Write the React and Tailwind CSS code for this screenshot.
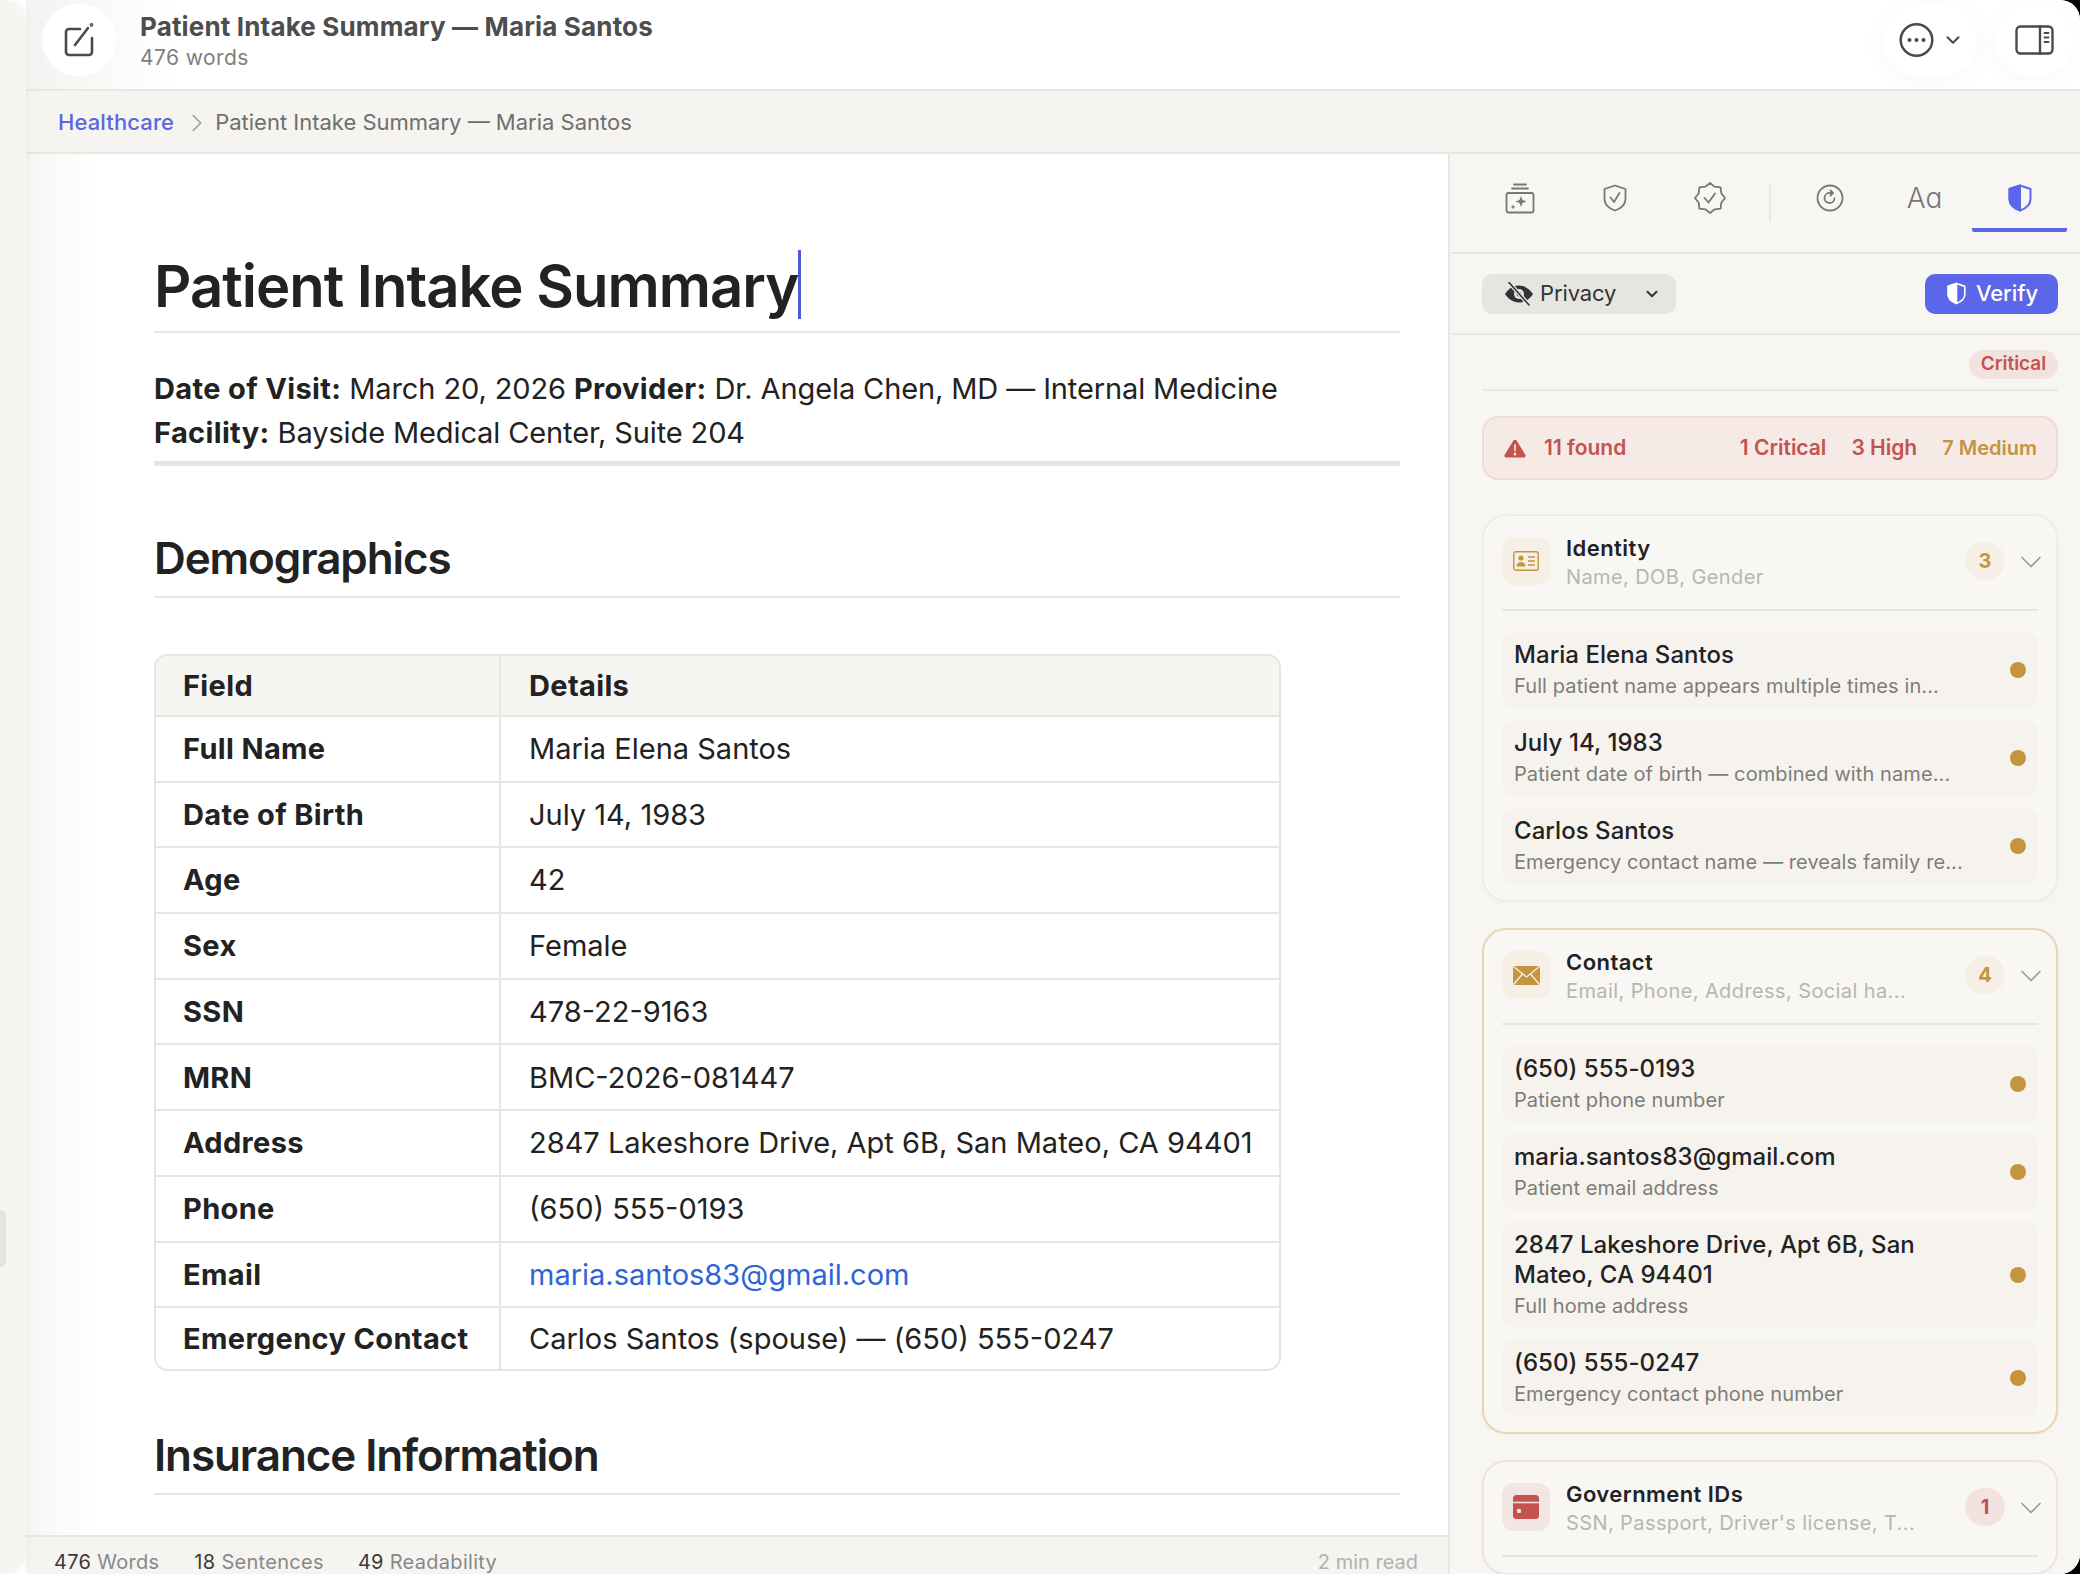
import React from "react";
import { ChevronDown, ChevronRight } from "lucide-react";

const rows = [
  ["Full Name", "Maria Elena Santos"],
  ["Date of Birth", "July 14, 1983"],
  ["Age", "42"],
  ["Sex", "Female"],
  ["SSN", "478-22-9163"],
  ["MRN", "BMC-2026-081447"],
  ["Address", "2847 Lakeshore Drive, Apt 6B, San Mateo, CA 94401"],
  ["Phone", "(650) 555-0193"],
  ["Email", "maria.santos83@gmail.com"],
  ["Emergency Contact", "Carlos Santos (spouse) — (650) 555-0247"],
];

const identityItems = [
  ["Maria Elena Santos", "Full patient name appears multiple times in..."],
  ["July 14, 1983", "Patient date of birth — combined with name..."],
  ["Carlos Santos", "Emergency contact name — reveals family re..."],
];

const contactItems = [
  ["(650) 555-0193", "Patient phone number"],
  ["maria.santos83@gmail.com", "Patient email address"],
  ["2847 Lakeshore Drive, Apt 6B, San Mateo, CA 94401", "Full home address"],
  ["(650) 555-0247", "Emergency contact phone number"],
];

// wavy outline for the verified badge
const badgePoints = Array.from({ length: 16 }, (_, i) => {
  const a = (i * Math.PI) / 8 - Math.PI / 2;
  const r = i % 2 === 0 ? 15 : 12.2;
  return `${(16 + r * Math.cos(a)).toFixed(1)},${(16 + r * Math.sin(a)).toFixed(1)}`;
}).join(" ");

const PenSquare = () => (
  <svg width="36" height="36" viewBox="0 0 36 36" fill="none" stroke="#4a4a4a" strokeWidth="2.6" strokeLinecap="round" strokeLinejoin="round">
    <path d="M19 7H8a3 3 0 0 0-3 3v20a3 3 0 0 0 3 3h20a3 3 0 0 0 3-3V16" />
    <path d="M14 23 27 6" />
    <circle cx="30.5" cy="2.8" r="0.6" fill="#4a4a4a" />
  </svg>
);

const DotsCircle = () => (
  <svg width="35" height="36" viewBox="0 0 35 36" fill="none">
    <circle cx="17.5" cy="18" r="15.8" stroke="#4a4a4a" strokeWidth="2.5" />
    <circle cx="10.5" cy="18" r="2" fill="#4a4a4a" />
    <circle cx="17.5" cy="18" r="2" fill="#4a4a4a" />
    <circle cx="24.5" cy="18" r="2" fill="#4a4a4a" />
  </svg>
);

const PanelIcon = () => (
  <svg width="39" height="30" viewBox="0 0 39 30" fill="none" stroke="#4a4a4a" strokeWidth="2.4" strokeLinecap="round">
    <rect x="1.5" y="1.5" width="36" height="27" rx="4" />
    <path d="M25 1.5v27" />
    <path d="M29.5 8h4M29.5 12.5h4M29.5 17h4" strokeWidth="1.8" />
  </svg>
);

const JarIcon = () => (
  <svg width="30" height="31" viewBox="0 0 30 31" fill="none" stroke="#777" strokeWidth="1.8" strokeLinecap="round" strokeLinejoin="round">
    <path d="M9 1.5h12M7 5.5h16" />
    <rect x="1.5" y="10" width="27" height="19.5" rx="2" />
    <path d="M16 13l1.5 4 4 1.5-4 1.5-1.5 4-1.5-4-4-1.5 4-1.500z" fill="#777" stroke="none" />
    <path d="M8 21.5l.7 1.8 1.8.7-1.8.7-.7 1.8-.7-1.8-1.8-.7 1.8-.7z" fill="#777" stroke="none" />
  </svg>
);

const ShieldCheck = () => (
  <svg width="24" height="28" viewBox="0 0 24 28" fill="none" stroke="#777" strokeWidth="1.8" strokeLinecap="round" strokeLinejoin="round">
    <path d="M12 1.5 22.5 5v10c0 5.500-4.500 9.500-10.500 11.500C6 24.500 1.500 20.500 1.500 15V5z" />
    <path d="m7.500 13.500 3.500 4.500 5.500-9" />
  </svg>
);

const WavyBadge = () => (
  <svg width="32" height="32" viewBox="0 0 32 32" fill="none" stroke="#777" strokeWidth="1.8" strokeLinecap="round" strokeLinejoin="round">
    <polygon points={badgePoints} />
    <path d="m10.500 16 4 4.500 6.500-9" />
  </svg>
);

const RedoCircle = () => (
  <svg width="28" height="28" viewBox="0 0 28 28" fill="none" stroke="#777" strokeWidth="1.8" strokeLinecap="round" strokeLinejoin="round">
    <circle cx="14" cy="14" r="12.500" />
    <path d="M18.500 14.500a5 5 0 1 1-4.500-5.500h2.500" />
    <path d="m14.500 6.500 2.500 2.500-2.500 2.500" />
  </svg>
);

const HalfShield = ({ fill, stroke, width, height }) => (
  <svg width={width} height={height} viewBox="0 0 24 28" fill="none" stroke={stroke} strokeWidth="2" strokeLinejoin="round">
    <path d="M12 1.500 22.500 5v10c0 5.500-4.500 9.500-10.500 11.500C6 24.500 1.500 20.500 1.500 15V5z" />
    <path d="M12 1.500V26.500C6 24.500 1.500 20.500 1.500 15V5z" fill={fill} />
  </svg>
);

const EyeSlash = () => (
  <svg width="30" height="24" viewBox="0 0 30 24" fill="none">
    <path d="M15 3.500C8.500 3.500 3.500 8 1 12c2.500 4 7.500 8.500 14 8.500S26.500 16 29 12c-2.500-4-7.500-8.500-14-8.500z" fill="#333" />
    <circle cx="15" cy="12" r="5" fill="#e5e5e2" />
    <circle cx="15" cy="12" r="2.500" fill="#333" />
    <path d="M5 0.500 25 23" stroke="#e5e5e2" strokeWidth="4" />
    <path d="M5 0.500 25 23" stroke="#333" strokeWidth="1.600" strokeLinecap="round" />
  </svg>
);

const Triangle = () => (
  <svg width="22" height="19" viewBox="0 0 22 19">
    <path d="M11 0.800c.7 0 1.300.3 1.700 1l8.600 14c.8 1.300-.1 2.800-1.700 2.800H2.400C.8 18.600-.1 17.100.7 15.800l8.600-14c.4-.7 1-1 1.700-1z" fill="#c4524f" />
    <path d="M10 5.500h2l-.3 7h-1.400zM11 13.800a1.400 1.400 0 1 1 0 2.800 1.400 1.400 0 0 1 0-2.800z" fill="#f6e9e6" />
  </svg>
);

const IdIcon = () => (
  <svg width="26" height="20" viewBox="0 0 26 20" fill="none">
    <rect x="0.800" y="0.800" width="24.400" height="18.400" rx="2" stroke="#c4943f" strokeWidth="1.400" />
    <circle cx="8" cy="7" r="2.600" fill="#c4943f" />
    <path d="M3.500 15.500c0-3 2-4.500 4.500-4.500s4.500 1.500 4.500 4.500z" fill="#c4943f" />
    <path d="M15 6h7M15 10h7M15 14h7" stroke="#c4943f" strokeWidth="1.400" />
  </svg>
);

const MailIcon = () => (
  <svg width="27" height="19" viewBox="0 0 27 19">
    <rect width="27" height="19" rx="1.500" fill="#c4943f" />
    <path d="M0.500 0.500 13.500 11 26.500 0.500M0.500 18.500 9.500 8M26.500 18.500 17.500 8" fill="none" stroke="#f5efe5" strokeWidth="1.300" />
  </svg>
);

const CardIcon = () => (
  <svg width="26" height="24" viewBox="0 0 26 24">
    <rect width="26" height="24" rx="3.500" fill="#c4524f" />
    <path d="M0 7.500h26" stroke="#f2e6e3" strokeWidth="1.600" />
    <rect x="4" y="14" width="4" height="4" rx="1" fill="#f2e6e3" />
  </svg>
);

const Item = ({ title, sub }) => (
  <div className="flex items-center rounded-[12px] bg-[#f6f3ee] pl-[12px] pr-[12px] pt-[8px] pb-[9px]">
    <div className="w-[446px]">
      <div className="text-[24px] leading-[30px] font-medium text-[#222] tracking-[0.002em]">{title}</div>
      <div className="mt-[3px] whitespace-nowrap text-[20px] leading-[26px] text-[#7d7d7a] tracking-[0.005em]">{sub}</div>
    </div>
    <span className="ml-auto h-[16px] w-[16px] rounded-full bg-[#c4943f]" />
  </div>
);

const Group = ({ icon, iconBg, title, sub, count, countCls, border, items }) => (
  <div className={`rounded-[24px] border-2 bg-[#f8f7f4] px-[18px] pt-[21px] pb-[16px] shadow-[0_2px_8px_rgba(0,0,0,0.02)] ${border}`}>
    <div className="flex h-[48px] items-center">
      <div className={`flex h-[48px] w-[48px] items-center justify-center rounded-[12px] ${iconBg}`}>{icon}</div>
      <div className="ml-[16px] mt-[1px] min-w-0">
        <div className="text-[22px] leading-[28px] font-semibold text-[#222] tracking-[0.02em]">{title}</div>
        <div className="mt-[2px] text-[20px] leading-[26px] text-[#b6b6b2] tracking-[0.02em]">{sub}</div>
      </div>
      <div className={`ml-auto flex h-[38px] w-[40px] items-center justify-center rounded-full text-[20px] font-bold ${countCls}`}>{count}</div>
      <ChevronDown className="ml-[8px] mr-[-11px] mt-[1px]" size={36} strokeWidth={1.1} color="#9a9a96" />
    </div>
    <div className="mt-[24px] h-[2px] bg-[#e6e5e1]" />
    {items && (
      <div className="mt-[21px] flex flex-col gap-[12px]">
        {items.map(([t, s]) => (
          <Item key={t} title={t} sub={s} />
        ))}
      </div>
    )}
  </div>
);

export default function App() {
  return (
    <div className="flex h-[1574px] w-[2080px] overflow-hidden bg-black font-[family-name:Inter,sans-serif] text-[#222]">
      <div className="flex h-full w-full overflow-hidden rounded-r-[20px] bg-white">
        {/* left rail */}
        <div className="relative z-20 w-[26px] shrink-0 rounded-r-[22px] bg-[#f5f5f2] shadow-[2px_0_8px_rgba(0,0,0,0.04)]">
          <div className="absolute left-0 top-[1210px] h-[57px] w-[6px] rounded-r-[5px] bg-[#e4e4e2]" />
        </div>

        <div className="flex min-w-0 flex-1 flex-col">
          {/* top bar */}
          <header className="flex h-[91px] shrink-0 items-start border-b-2 border-[#e8e7e3] bg-[linear-gradient(90deg,#f3f3f1_0,#fff_150px)] pl-[16px] pr-[7px] pt-[4px]">
            <div className="flex h-[72px] w-[74px] items-center justify-center rounded-full bg-white">
              <PenSquare />
            </div>
            <div className="ml-[24px] pt-[7px]">
              <div className="text-[26px] leading-[32px] font-bold text-[#4d4d4d] tracking-[0.006em]">Patient Intake Summary — Maria Santos</div>
              <div className="mt-[1px] text-[21px] leading-[27px] text-[#7e7e7e] tracking-[0.02em]">476 words</div>
            </div>
            <div className="relative z-10 ml-auto flex h-[72px] w-[94px] items-center justify-center gap-[8px] rounded-full bg-white pl-[2px] shadow-[0_4px_28px_rgba(0,0,0,0.035)]">
              <DotsCircle />
              <ChevronDown size={22} strokeWidth={2.2} color="#4a4a4a" />
            </div>
            <div className="relative z-10 ml-[18px] flex h-[72px] w-[78px] items-center justify-center rounded-full bg-white shadow-[0_4px_28px_rgba(0,0,0,0.035)]">
              <PanelIcon />
            </div>
          </header>

          {/* breadcrumb */}
          <nav className="flex h-[63px] shrink-0 items-center border-b-2 border-[#e8e7e3] bg-[#f5f4f1] pl-[32px] pt-[2px]">
            <span className="text-[22px] font-medium text-[#5b66e0] tracking-[0.005em]">Healthcare</span>
            <ChevronRight className="ml-[8px] mr-[-2px]" size={30} strokeWidth={1.2} color="#9b9b98" />
            <span className="ml-[5px] text-[22px] text-[#6f6f6c]">Patient Intake Summary — Maria Santos</span>
          </nav>

          <div className="flex min-h-0 flex-1">
            <div className="flex min-w-0 flex-1 flex-col">
              {/* document */}
              <main className="min-h-0 flex-1 overflow-hidden bg-[linear-gradient(90deg,#f6f6f4_0,#fff_70px)] pl-[128px] pr-[48px] pt-[94px]">
                <div className="flex h-[85px] items-start border-b-2 border-[#e5e5e2]">
                  <h1 className="text-[58px] leading-[76px] font-semibold tracking-[-0.017em] text-[#222]">Patient Intake Summary</h1>
                  <span className="mt-[2px] h-[69px] w-[3px] bg-[#4f5ad8]" />
                </div>
                <p className="mt-[34px] text-[29px] leading-[44px] text-[#222] tracking-[-0.004em]">
                  <b className="font-bold tracking-[0.012em]">Date of Visit:</b> March 20, 2026 <b className="font-bold tracking-[0.012em]">Provider:</b> Dr. Angela Chen, MD — Internal Medicine
                  <br />
                  <b className="font-bold tracking-[0.012em]">Facility:</b> Bayside Medical Center, Suite 204
                </p>
                <div className="mt-[6px] h-[5px] bg-[#e5e5e2]" />
                <h2 className="mt-[64px] pb-[10px] border-b-2 border-[#e5e5e2] text-[44px] leading-[56px] font-semibold tracking-[-0.025em]">Demographics</h2>
                <table className="mt-[56px] w-[1127px] table-fixed border-separate border-spacing-0 overflow-hidden rounded-[14px] border-2 border-[#e5e5e2] text-[29px]">
                  <colgroup>
                    <col className="w-[345px]" />
                    <col />
                  </colgroup>
                  <thead>
                    <tr className="h-[59px] bg-[#f5f5f2]">
                      <th className="border-r-2 border-[#e5e5e2] pl-[27px] text-left font-bold tracking-[0.012em]">Field</th>
                      <th className="pl-[28px] text-left font-bold tracking-[0.012em]">Details</th>
                    </tr>
                  </thead>
                  <tbody>
                    {rows.map(([k, v], i) => (
                      <tr key={k} className={i === rows.length - 1 ? "h-[63px]" : "h-[65.7px]"}>
                        <td className="border-r-2 border-t-2 border-[#e5e5e2] pl-[27px] font-bold tracking-[0.012em] whitespace-nowrap">{k}</td>
                        <td className={`border-t-2 border-[#e5e5e2] pl-[28px] whitespace-nowrap ${k === "Email" ? "text-[#2f64d6]" : ""}`}>{v}</td>
                      </tr>
                    ))}
                  </tbody>
                </table>
                <h2 className="mt-[56px] pb-[10px] border-b-2 border-[#e5e5e2] text-[44px] leading-[56px] font-semibold tracking-[-0.025em]">Insurance Information</h2>
              </main>

              {/* status bar */}
              <footer className="flex h-[39px] shrink-0 items-start border-t-2 border-[#e8e7e3] bg-[#f5f4f1] pl-[28px] pr-[30px] pt-[12px] text-[20px] leading-[26px] tracking-[0.015em]">
                <span className="text-[#3a3a3a]">476 <span className="text-[#888]">Words</span></span>
                <span className="ml-[35px] text-[#3a3a3a]">18 <span className="text-[#888]">Sentences</span></span>
                <span className="ml-[34px] text-[#3a3a3a]">49 <span className="text-[#888]">Readability</span></span>
                <span className="ml-auto text-[#b2b2ae] tracking-normal">2 min read</span>
              </footer>
            </div>

            {/* right panel */}
            <aside className="w-[632px] shrink-0 overflow-hidden border-l-2 border-[#e8e7e3] bg-[#f7f6f3]">
              <div className="flex h-[100px] items-start border-b-2 border-[#e8e7e3] pl-[22px]">
                <div className="flex h-[78px] w-[95px] items-center justify-center border-b-[4px] border-transparent pt-[14px]"><JarIcon /></div>
                <div className="flex h-[78px] w-[95px] items-center justify-center border-b-[4px] border-transparent pt-[14px]"><ShieldCheck /></div>
                <div className="flex h-[78px] w-[95px] items-center justify-center border-b-[4px] border-transparent pt-[14px]"><WavyBadge /></div>
                <div className="flex w-[25px] justify-center pt-[29px]"><div className="h-[39px] w-[2px] bg-[#e8e7e3]" /></div>
                <div className="flex h-[78px] w-[95px] items-center justify-center border-b-[4px] border-transparent pt-[14px]"><RedoCircle /></div>
                <div className="flex h-[78px] w-[95px] items-center justify-center border-b-[4px] border-transparent pt-[14px] text-[28px] font-light text-[#777]">Aɑ</div>
                <div className="flex h-[78px] w-[95px] items-center justify-center rounded-b-[2px] border-b-[4px] border-[#5b66e8] pt-[14px]">
                  <HalfShield fill="#5b66e8" stroke="#5b66e8" width={24} height={28} />
                </div>
              </div>

              <div className="flex h-[81px] items-center justify-between border-b-2 border-[#e8e7e3] pl-[32px] pr-[22px]">
                <div className="flex h-[40px] w-[194px] items-center rounded-[10px] bg-[#e5e5e2] pl-[22px]">
                  <EyeSlash />
                  <span className="ml-[6px] text-[22px] text-[#333] tracking-[-0.005em]">Privacy</span>
                  <ChevronDown className="ml-[27px]" size={18} strokeWidth={2.6} color="#333" />
                </div>
                <div className="flex h-[40px] w-[133px] items-center rounded-[10px] bg-[#5b66e8] pl-[22px]">
                  <HalfShield fill="#fff" stroke="#fff" width={19} height={23} />
                  <span className="ml-[10px] text-[22px] font-medium text-white tracking-[-0.005em]">Verify</span>
                </div>
              </div>

              <div className="pl-[32px] pr-[22px] pt-[15px]">
                <div className="flex justify-end border-b-2 border-[#e8e7e3] pb-[10px]">
                  <span className="flex h-[29px] w-[89px] items-center justify-center rounded-full bg-[#f2e3e0] text-[19px] font-semibold text-[#c4524f]">Critical</span>
                </div>

                <div className="mt-[25px] flex h-[64px] items-center rounded-[16px] border-2 border-[#f1d9d6] bg-[#f6eae7] pl-[20px] pr-[19px] text-[21px] font-semibold">
                  <Triangle />
                  <span className="ml-[18px] text-[#c4524f]">11 found</span>
                  <span className="ml-auto text-[#c4524f]">1 Critical</span>
                  <span className="ml-[25px] text-[#c4524f]">3 High</span>
                  <span className="ml-[25px] text-[20px] text-[#c4943f]">7 Medium</span>
                </div>

                <div className="mt-[34px] flex flex-col gap-[26px]">
                  <Group icon={<IdIcon />} iconBg="bg-[#f5efe5]" title="Identity" sub="Name, DOB, Gender" count="3" countCls="bg-[#f5efe5] text-[#c4943f]" border="border-[#efece5]" items={identityItems} />
                  <Group icon={<MailIcon />} iconBg="bg-[#f5efe5]" title="Contact" sub="Email, Phone, Address, Social ha..." count="4" countCls="bg-[#f5efe5] text-[#c4943f]" border="border-[#e8d5b3]" items={contactItems} />
                  <Group icon={<CardIcon />} iconBg="bg-[#f2e6e3]" title="Government IDs" sub="SSN, Passport, Driver's license, T..." count="1" countCls="bg-[#f2e3e0] text-[#c4524f]" border="border-[#f2e2de]" />
                </div>
              </div>
            </aside>
          </div>
        </div>
      </div>
    </div>
  );
}
